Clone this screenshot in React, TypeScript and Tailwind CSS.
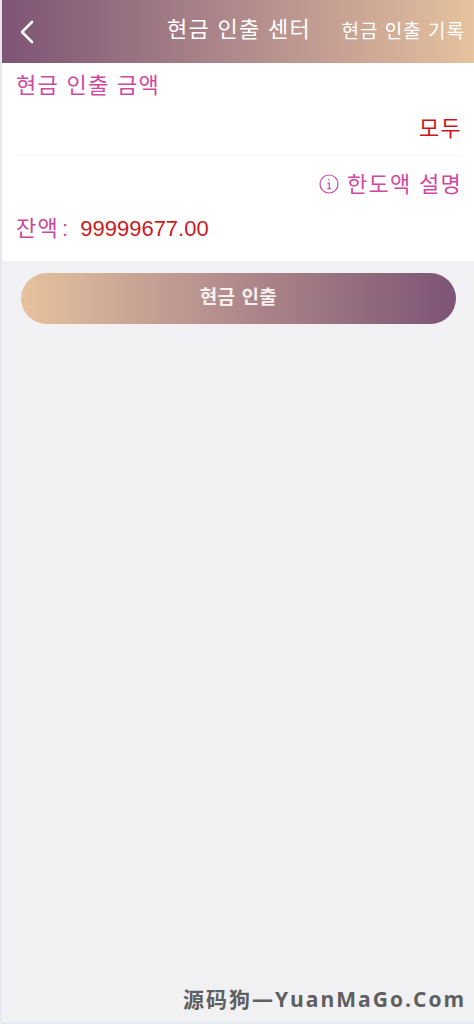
import React from 'react'

const cjk = '"Liberation Sans", "Noto Sans CJK KR", sans-serif'

export default function App() {
  return (
    <div
      className="relative h-[1024px] w-[474px] overflow-hidden bg-[#e6e8f0] pl-[2px] pb-[2px]"
      style={{ fontFamily: cjk }}
    >
      <div className="flex h-full flex-col bg-[#f1f1f4]">
        {/* Header */}
        <div className="relative flex h-[63px] shrink-0 items-center justify-between bg-gradient-to-r from-[#7d5475] to-[#e6c29e] pl-[16px] pr-[9px] text-white">
          <svg width="16" height="24" viewBox="0 0 16 24" fill="none" className="ml-[1px] mt-[1px]">
            <path d="M13 2 L3 12 L13 22" stroke="white" strokeWidth="2.6" strokeLinecap="round" strokeLinejoin="round" />
          </svg>
          <div className="absolute left-[165px] top-[15px] text-[22px] leading-[30px] tracking-[1.3px] text-white">현금 인출 센터</div>
          <div className="text-[19px] leading-[24px] tracking-[1px] text-white">현금 인출 기록</div>
        </div>

        {/* Form */}
        <div className="h-[198px] shrink-0 bg-white pl-[13px] pr-[12px]">
          <div className="pl-[1px] pt-[8px] text-[22px] leading-[30px] tracking-[1.3px] text-[#cf4a9f]">현금 인출 금액</div>
          <div className="flex h-[55px] items-center justify-end border-b border-[#f5f5f7] text-[22px] tracking-[1.3px] text-[#d0121b]">
            모두
          </div>
          <div className="flex h-[56px] items-center justify-end gap-[8px] text-[22px] tracking-[1.3px] text-[#cf4a9f]">
            <svg width="20" height="20" viewBox="0 0 20 20" fill="none" className="mt-[-1px]">
              <circle cx="10" cy="10" r="9" stroke="#cf4a9f" strokeWidth="1.2" />
              <path d="M10 5.2 V6.8 M8.4 9 H10.3 V14.6 M8.2 14.6 H12" stroke="#cf4a9f" strokeWidth="1.2" />
            </svg>
            <span>한도액 설명</span>
          </div>
          <div className="flex items-center pl-[1px] pt-[2px] text-[22px] leading-[30px]">
            <span className="tracking-[1.3px] text-[#c5489a]">잔액</span>
            <span className="ml-[3px] text-[#c5489a]">:</span>
            <span className="ml-[12px] text-[#cc1a22]">99999677.00</span>
          </div>
        </div>

        {/* Submit */}
        <div className="px-[19px] pt-[12px]">
          <button className="h-[51px] w-[435px] rounded-[26px] bg-gradient-to-r from-[#e6c29e] to-[#7d5475] text-[19px] font-bold tracking-[0.5px] text-[#f5f0ee]">
            현금 인출
          </button>
        </div>
      </div>

      {/* Watermark */}
      <div className="absolute bottom-[11px] right-[8px] text-[21px] font-bold leading-[28px] tracking-[2px] text-[#5f5f5f]" style={{ fontFamily: '"Open Sans", "Noto Sans CJK SC", sans-serif' }}>
        源码狗—YuanMaGo.Com
      </div>
    </div>
  )
}
